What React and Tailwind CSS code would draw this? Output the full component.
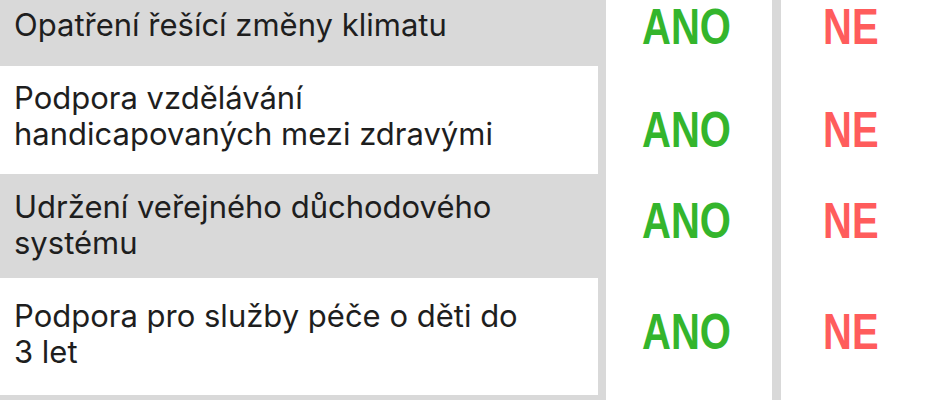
import React from "react";

const rows = [
  { lines: ["Opatření řešící změny klimatu"], bg: "bg-transparent", h: "h-[66px]", pt: "pt-[7px]", vpt: "pt-[6px]" },
  { lines: ["Podpora vzdělávání", "handicapovaných mezi zdravými"], bg: "bg-white", h: "h-[108px]", pt: "pt-[14px]", vpt: "pt-[43px]" },
  { lines: ["Udržení veřejného důchodového", "systému"], bg: "bg-transparent", h: "h-[104px]", pt: "pt-[15px]", vpt: "pt-[26px]" },
  { lines: ["Podpora pro služby péče o děti do", "3 let"], bg: "bg-white", h: "h-[117px]", pt: "pt-[20px]", vpt: "pt-[33px]" },
];

export default function App() {
  return (
    <div className="flex h-[400px] w-[940px] overflow-hidden bg-[#d9d9d9]">
      <div className="flex w-[598px] flex-col">
        {rows.map((r, i) => (
          <div
            key={i}
            className={`${r.bg} ${r.h} ${r.pt} pl-[14px] font-['Inter',sans-serif] text-[31px] leading-[36px] text-[#1e1e1e]`}
          >
            {r.lines.map((l, j) => (
              <div key={j} className="whitespace-nowrap">
                {l}
              </div>
            ))}
          </div>
        ))}
      </div>
      <div className="ml-[8px] flex w-[166px] flex-col bg-white">
        {rows.map((r, i) => (
          <div key={i} className={`${r.h} ${r.vpt} pl-[36px]`}>
            <span className="block h-[40px] scale-y-[1.25] font-['Liberation_Sans',Arial,sans-serif] text-[40px] font-bold leading-[40px] text-[#34b52c]">
              ANO
            </span>
          </div>
        ))}
      </div>
      <div className="ml-[9px] flex flex-1 flex-col bg-white">
        {rows.map((r, i) => (
          <div key={i} className={`${r.h} ${r.vpt} pl-[42px]`}>
            <span className="block h-[40px] scale-y-[1.25] font-['Liberation_Sans',Arial,sans-serif] text-[40px] font-bold leading-[40px] text-[#ff5c5c]">
              NE
            </span>
          </div>
        ))}
      </div>
    </div>
  );
}
